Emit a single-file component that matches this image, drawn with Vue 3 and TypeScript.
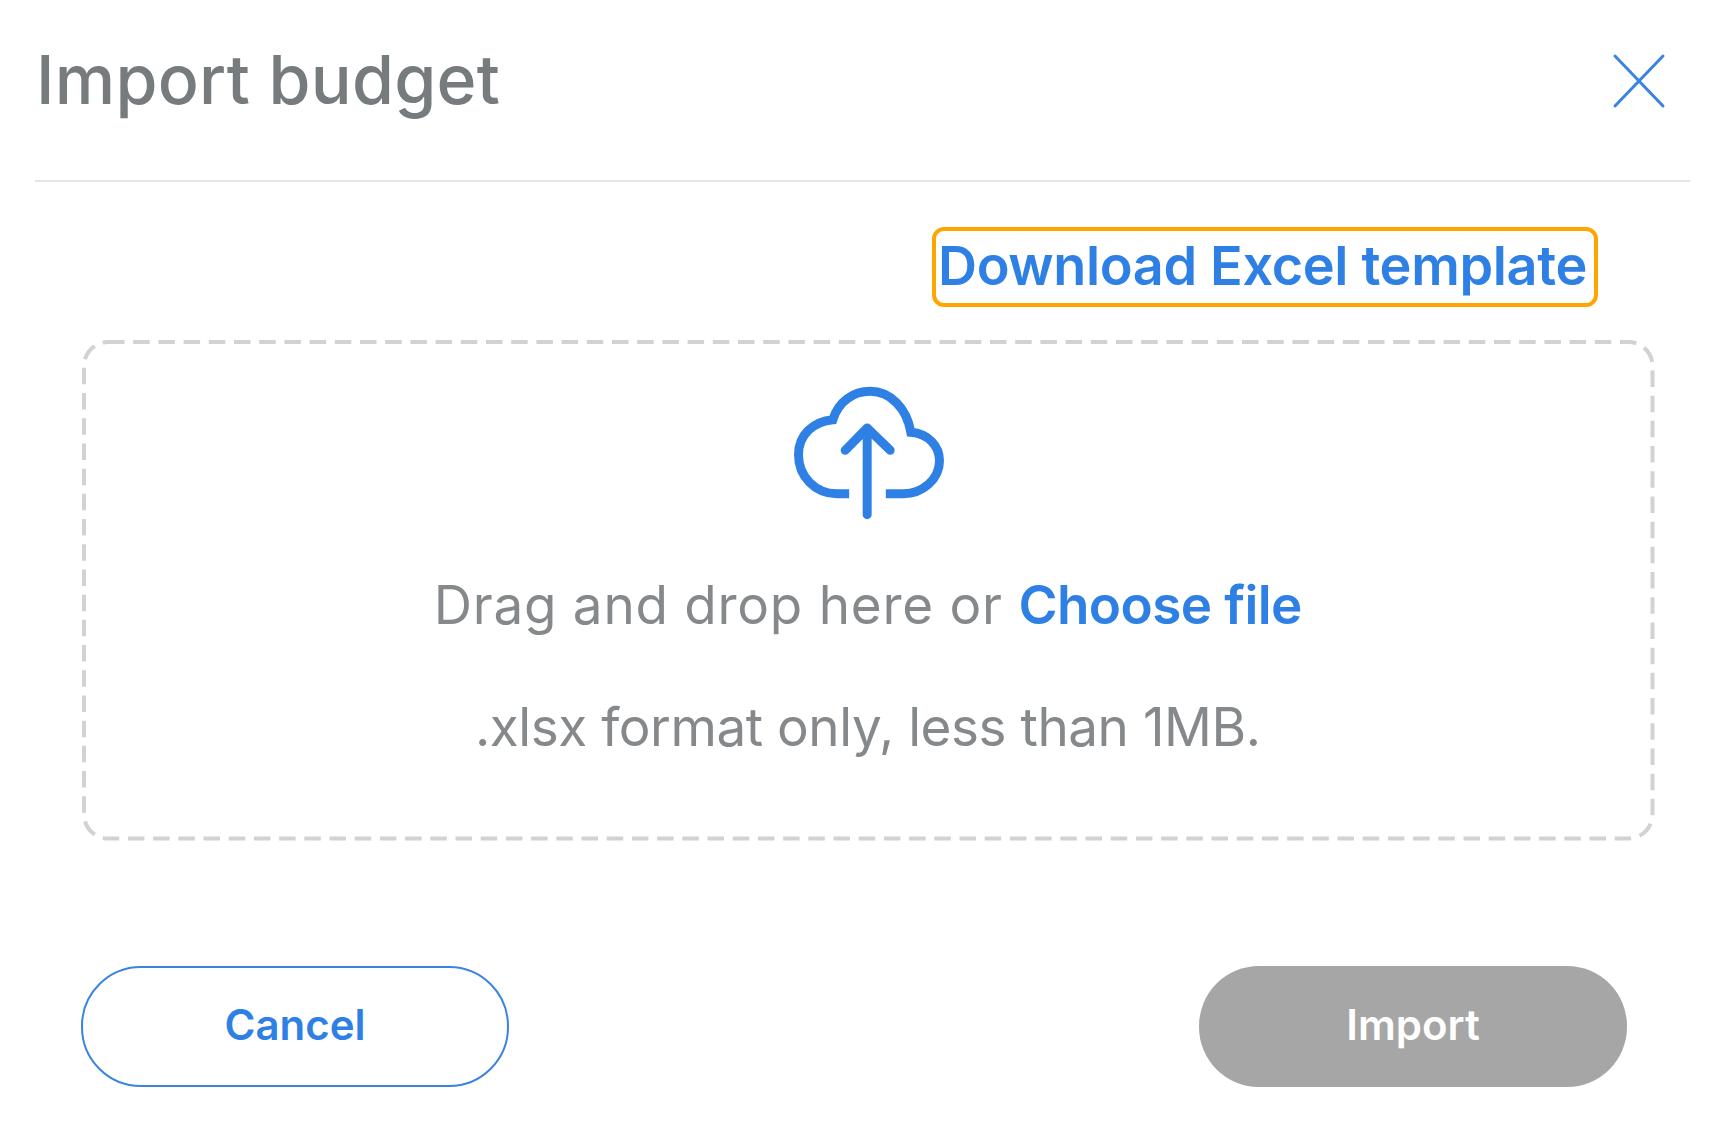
<script setup lang="ts">
const title = 'Import budget'
const templateLabel = 'Download Excel template'
</script>

<template>
  <div class="dialog">
    <header class="dialog-header">
      <h1 class="title">{{ title }}</h1>
      <button class="close" aria-label="Close">
        <svg width="54" height="56" viewBox="0 0 54 56" fill="none">
          <path d="M3 3L51 53M51 3L3 53" stroke="#3a84e0" stroke-width="3" stroke-linecap="round" />
        </svg>
      </button>
    </header>

    <div class="template-row">
      <a class="template-link">{{ templateLabel }}</a>
    </div>

    <section class="dropzone">
      <svg class="dash" width="1573" height="501" fill="none">
        <rect x="2" y="2" width="1568.5" height="496.5" rx="24" stroke="#d2d2d2" stroke-width="4" stroke-dasharray="16.5 8.7" />
      </svg>
      <svg class="cloud" width="157" height="140" viewBox="150 70 470 420" fill="none">
        <path
          d="M327 402H290C225 402 175 350 175 285C175 225 220 185 278 180C295 125 340 95 390 95C450 95 500 145 512 218C565 222 598 260 598 303C598 360 545 402 490 402H437"
          stroke="#2f80e4"
          stroke-width="27"
        />
        <path
          d="M381 465V205M315 272L381 205L450 272"
          stroke="#2f80e4"
          stroke-width="27"
          stroke-linecap="round"
          stroke-linejoin="round"
        />
      </svg>
      <p class="drop-text">Drag and drop here or <span class="choose">Choose file</span></p>
      <p class="hint">.xlsx format only, less than 1MB.</p>
    </section>

    <footer class="actions">
      <button class="btn btn-cancel">Cancel</button>
      <button class="btn btn-import">Import</button>
    </footer>
  </div>
</template>

<style>
html,
body {
  background: #fff;
}
</style>

<style scoped>
.dialog {
  width: 1726px;
  height: 1130px;
  box-sizing: border-box;
  font-family: Inter, "Noto Sans", sans-serif;
  overflow: hidden;
}

.dialog-header {
  height: 182px;
  box-sizing: border-box;
  margin: 0 36px 0 35px;
  padding: 0 24px 22px 1px;
  border-bottom: 2px solid #e6e6e6;
  display: flex;
  align-items: center;
  justify-content: space-between;
}

.title {
  margin: 0;
  font-size: 68px;
  font-weight: 500;
  letter-spacing: 0.25px;
  color: #767b7e;
}

.close {
  background: none;
  border: 0;
  padding: 0;
  margin-top: 4px;
  display: flex;
}

.template-row {
  display: flex;
  justify-content: flex-end;
  padding: 45px 128px 0 0;
}

.template-link {
  box-sizing: border-box;
  width: 666px;
  height: 80px;
  padding: 0 5px 4px 0;
  border: 4px solid #ffa500;
  border-radius: 12px;
  display: flex;
  align-items: center;
  justify-content: center;
  font-size: 54px;
  font-weight: 600;
  letter-spacing: -0.35px;
  color: #2f80e4;
  white-space: nowrap;
}

.dropzone {
  position: relative;
  box-sizing: border-box;
  height: 501px;
  margin: 33px 72px 0 81.5px;
  display: flex;
  flex-direction: column;
  align-items: center;
  padding-top: 43px;
}

.dash {
  position: absolute;
  left: 0;
  top: 0;
}

.cloud {
  display: block;
  margin-left: 2px;
}

.drop-text,
.hint {
  margin: 0;
  font-size: 53px;
  line-height: 60px;
  font-weight: 400;
  color: #85898b;
  white-space: nowrap;
}

.drop-text {
  margin-top: 52px;
  letter-spacing: 0.75px;
}

.hint {
  margin-top: 62px;
  letter-spacing: -0.45px;
}

.choose {
  color: #2f80e4;
  font-weight: 600;
  letter-spacing: -0.6px;
}

.actions {
  display: flex;
  justify-content: space-between;
  padding: 125px 99px 0 81px;
}

.btn {
  width: 428px;
  height: 121px;
  box-sizing: border-box;
  border-radius: 60px;
  padding-bottom: 6px;
  font-family: inherit;
  font-size: 42px;
  font-weight: 600;
  letter-spacing: 0;
}

.btn-cancel {
  background: #fff;
  border: 2px solid #3a84e0;
  color: #2f80e4;
}

.btn-import {
  background: #a6a6a6;
  border: 0;
  color: #fff;
}
</style>
